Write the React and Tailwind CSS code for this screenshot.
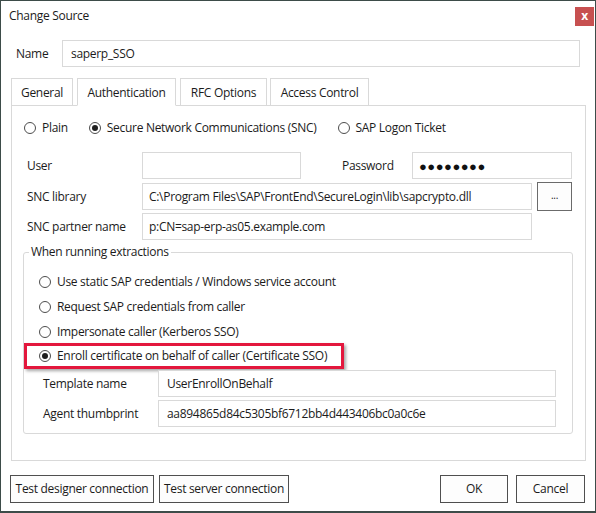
import React from "react";

const FONT = { fontFamily: '"Segoe UI", "Open Sans", "Noto Sans", sans-serif' };

// Radio button as Windows 10 draws it
function Radio({ checked, label, className = "" }) {
  return (
    <div className={"flex items-center " + className}>
      <div className="w-[12px] h-[12px] rounded-full border border-[#4d4d4d] bg-white flex items-center justify-center shrink-0">
        {checked ? <div className="w-[6px] h-[6px] rounded-full bg-[#1f1f1f]"></div> : null}
      </div>
      <span className="ml-[6px] whitespace-nowrap">{label}</span>
    </div>
  );
}

function TextBox({ value, className = "", children }) {
  return (
    <div
      className={
        "h-[27px] border border-[#d9d9d9] bg-white flex items-center px-[6px] whitespace-nowrap overflow-hidden " +
        className
      }
    >
      {children ? children : value}
    </div>
  );
}

function Tab({ label, selected, className = "" }) {
  return (
    <div
      className={
        "h-[28px] border border-[#d9d9d9] bg-white flex items-center justify-center pt-[1px] " +
        (selected ? "border-b-white" : "") +
        " " +
        className
      }
    >
      {label}
    </div>
  );
}

function Button({ label, className = "" }) {
  return (
    <div
      className={
        "h-[28px] border border-[#4f4f4f] bg-[#fdfdfd] flex items-center justify-center whitespace-nowrap " +
        className
      }
    >
      {label}
    </div>
  );
}

export default function App() {
  return (
    <div
      style={FONT}
      className="w-[596px] h-[513px] bg-white border border-[#3d4c49] border-b-[2px] flex flex-col text-[12px] tracking-[-0.3px] text-[#1b1b1b] leading-[16px]"
    >
      {/* title bar */}
      <div className="h-[29px] flex items-start shrink-0">
        <span className="ml-[8px] mt-[7px] text-[12px]">Change Source</span>
        <div className="ml-auto mr-[1px] mt-[6px] w-[19px] h-[19px] bg-[#c75050] text-white font-bold text-[12px] leading-none flex items-center justify-center pb-[2px]">
          x
        </div>
      </div>

      {/* name */}
      <div className="mt-[10px] flex items-center pl-[15px]">
        <span className="w-[46px]">Name</span>
        <TextBox value="saperp_SSO" className="w-[518px] bg-[#f2f2f2] border-[#d4d4d4] px-[8px]" />
      </div>

      {/* tabs */}
      <div className="mt-[11px] pl-[10px] flex relative z-10 -mb-px">
        <Tab label="General" className="w-[62px]" />
        <Tab label="Authentication" selected className="w-[99px] ml-[4px]" />
        <Tab label="RFC Options" className="w-[87px] ml-[4px]" />
        <Tab label="Access Control" className="w-[99px] ml-[3px]" />
      </div>

      {/* panel */}
      <div className="ml-[10px] w-[575px] h-[356px] border border-[#d9d9d9] flex flex-col shrink-0">
        <div className="mt-[12px] h-[20px] pl-[12px] flex items-center">
          <Radio label="Plain" />
          <Radio label="Secure Network Communications (SNC)" checked className="ml-[21px]" />
          <Radio label="SAP Logon Ticket" className="ml-[21px]" />
        </div>

        <div className="mt-[14px] flex items-center pl-[15px]">
          <span className="w-[115px]">User</span>
          <TextBox value="" className="w-[159px]" />
          <span className="ml-[41px] w-[70px]">Password</span>
          <TextBox className="w-[160px]">
            <span className="text-[13px] font-bold tracking-[0.5px] text-[#111]">●●●●●●●●</span>
          </TextBox>
        </div>

        <div className="mt-[3px] flex items-center pl-[15px]">
          <span className="w-[115px]">SNC library</span>
          <TextBox value="C:\Program Files\SAP\FrontEnd\SecureLogin\lib\sapcrypto.dll" className="w-[390px]" />
          <div className="ml-[5px] w-[35px] h-[29px] border border-[#6b6b6b] bg-[#fdfdfd] flex items-center justify-center text-[10px] pb-[3px]">
            ...
          </div>
        </div>

        <div className="mt-[2px] flex items-center pl-[15px]">
          <span className="w-[115px]">SNC partner name</span>
          <TextBox value="p:CN=sap-erp-as05.example.com" className="w-[390px]" />
        </div>

        <fieldset className="mt-[4px] ml-[11px] w-[550px] h-[190px] border border-[#d9d9d9] rounded-[3px] flex flex-col">
          <legend className="ml-[5px] px-[2px] leading-[16px]">When running extractions</legend>
          <div className="mt-[9px] h-[25px] pl-[15px] flex items-center">
            <Radio label="Use static SAP credentials / Windows service account" />
          </div>
          <div className="h-[25px] pl-[15px] flex items-center">
            <Radio label="Request SAP credentials from caller" />
          </div>
          <div className="h-[25px] pl-[15px] flex items-center">
            <Radio label="Impersonate caller (Kerberos SSO)" />
          </div>
          <div className="-mt-px w-[320px] h-[26px] border-[3px] border-[#e3173d] shadow-[2px_2px_3px_rgba(0,0,0,0.35)] pl-[12px] flex items-center">
            <Radio label="Enroll certificate on behalf of caller (Certificate SSO)" checked />
          </div>
          <div className="mt-[1px] flex items-center pl-[19px]">
            <span className="w-[115px]">Template name</span>
            <TextBox value="UserEnrollOnBehalf" className="w-[398px] px-[8px]" />
          </div>
          <div className="mt-[3px] flex items-center pl-[19px]">
            <span className="w-[115px]">Agent thumbprint</span>
            <TextBox value="aa894865d84c5305bf6712bb4d443406bc0a0c6e" className="w-[398px] px-[8px]" />
          </div>
        </fieldset>
      </div>

      {/* footer buttons */}
      <div className="mt-[14px] pl-[9px] pr-[10px] flex items-center">
        <Button label="Test designer connection" className="w-[144px]" />
        <Button label="Test server connection" className="w-[130px] ml-[5px]" />
        <Button label="OK" className="w-[68px] ml-auto" />
        <Button label="Cancel" className="w-[69px] ml-[8px]" />
      </div>
    </div>
  );
}
